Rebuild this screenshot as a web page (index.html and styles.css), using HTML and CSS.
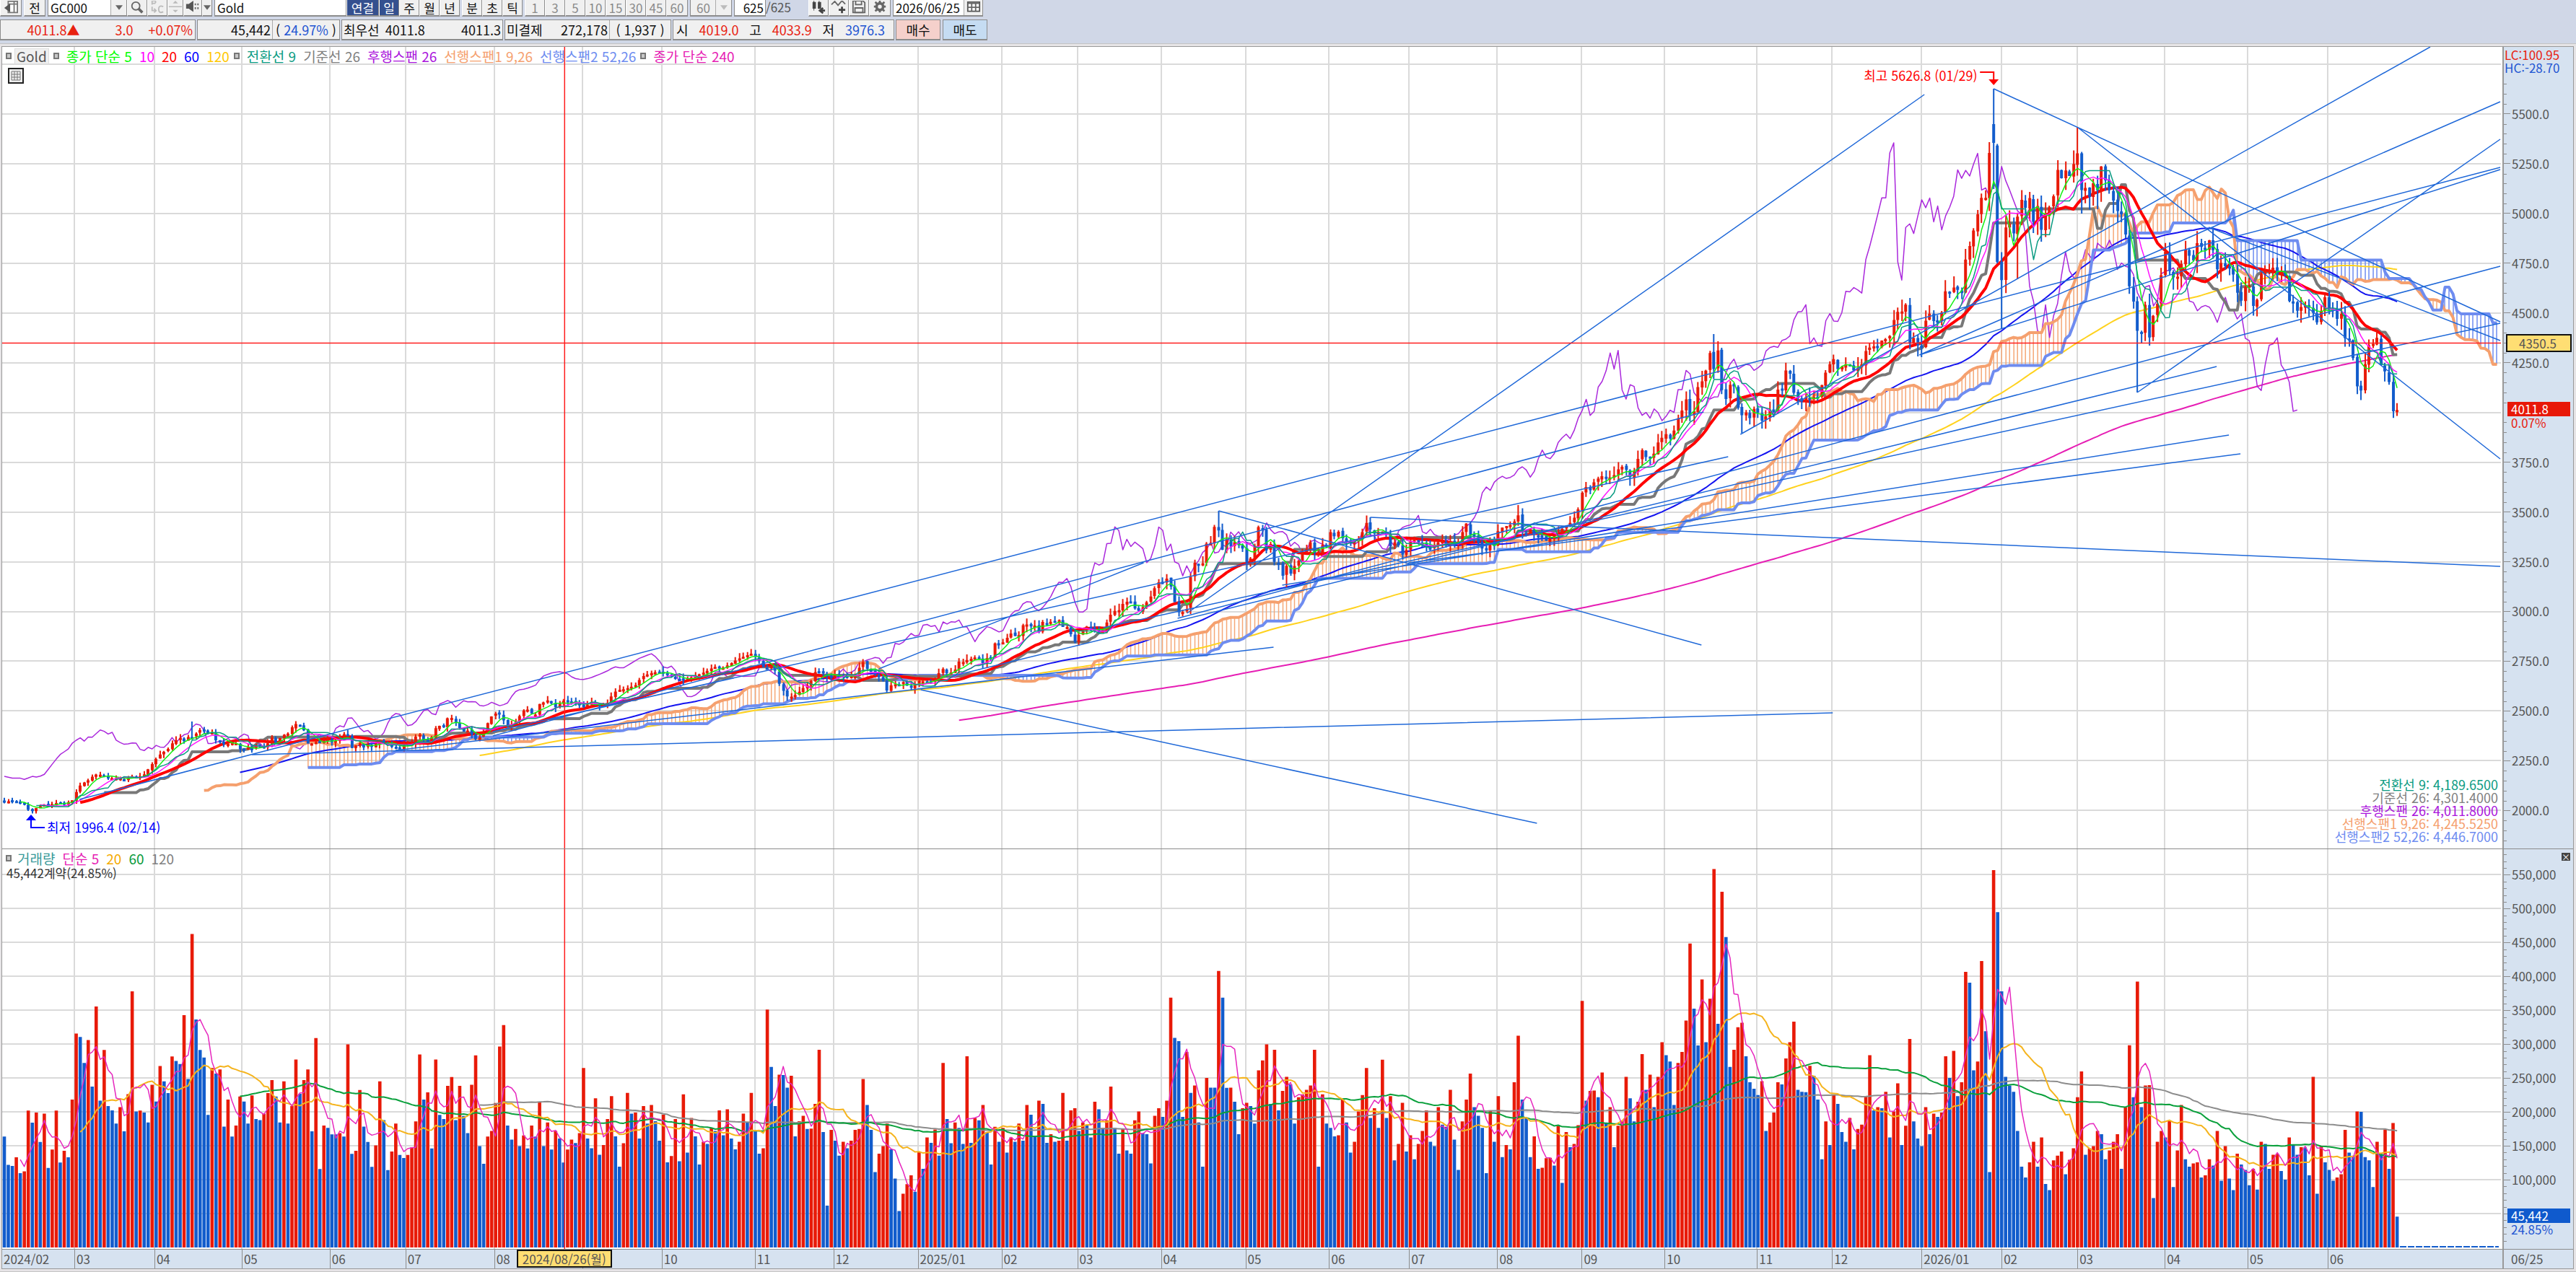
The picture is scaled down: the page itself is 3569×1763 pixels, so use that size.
FILE: index.html
```html
<!DOCTYPE html>
<html lang="ko">
<head>
<meta charset="utf-8">
<title>Gold 차트</title>
<link rel="stylesheet" href="styles.css">
</head>
<body>
<header class="toolbar">
  <button class="tool w30" aria-label="이전"><svg class="ico" viewBox="0 0 24 22"><path d="M8 1h14v17H8z" fill="#fff" stroke="#777" stroke-width="2"/><path d="M17 1v17M8 5h14" stroke="#777" stroke-width="2"/><path d="M11 4v14L2 11z" fill="#555"/></svg></button>
  <button class="tool w30 gap">전</button>
  <div class="field gap code"><input aria-label="종목코드" value="GC000"><button class="drop" aria-label="종목 목록"><svg class="tri" viewBox="0 0 12 8"><path d="M0 0h12L6 8z"/></svg></button></div>
  <button class="tool w28" aria-label="검색"><svg class="ico" viewBox="0 0 24 22"><circle cx="10" cy="8" r="6" fill="none" stroke="#666" stroke-width="2"/><path d="M14 12l6 6" stroke="#666" stroke-width="4"/></svg></button>
  <button class="tool w28 off" aria-label="풋콜"><svg class="ico" viewBox="0 0 24 22"><path d="M4 6V0h4q3 2 0 4H4M4 9v6h5M7 12l3 3-3 3" fill="none" stroke="#bbb" stroke-width="2"/><path d="M21 9q-7-3-7 4t7 4" fill="none" stroke="#bbb" stroke-width="2"/></svg></button>
  <button class="tool w22 off" aria-label="증감"><svg class="ico" viewBox="0 0 20 22"><path d="M6 4h8l-4-4zM6 14h8l-4 4z" fill="#bbb"/><path d="M0 9h20" stroke="#999"/></svg></button>
  <button class="tool w26" aria-label="소리"><svg class="ico" viewBox="0 0 24 22"><path d="M2 5h4l7-5v17l-7-5H2z" fill="#555"/><path d="M16 4v3M20 4v3M16 10v3M20 10v3" stroke="#666" stroke-width="2"/></svg></button>
  <button class="tool w14" aria-label="소리 목록"><svg class="tri" viewBox="0 0 12 8"><path d="M0 0h12L6 8z"/></svg></button>
  <div class="field gap name"><input aria-label="종목명" value="Gold"></div>
  <button class="tool w45 on">연결</button><button class="tool w28 on">일</button><button class="tool w28">주</button><button class="tool w28">월</button><button class="tool w28">년</button>
  <button class="tool w28 gap">분</button><button class="tool w28">초</button><button class="tool w28">틱</button>
  <button class="tool w28 gap off">1</button><button class="tool w28 off">3</button><button class="tool w28 off">5</button><button class="tool w28 off">10</button><button class="tool w28 off">15</button><button class="tool w28 off">30</button><button class="tool w28 off">45</button><button class="tool w30 off">60</button>
  <div class="field gap minute"><input aria-label="분 단위" value="60"><button class="drop" aria-label="분 목록"><svg class="tri pale" viewBox="0 0 12 8"><path d="M0 0h12L6 8z"/></svg></button></div>
  <div class="field gap count"><input aria-label="표시 봉수" value="625"></div><span class="total">/625</span>
  <button class="tool w28" aria-label="봉 유형"><svg class="ico" viewBox="0 0 24 22"><path d="M3 2h5v10H3zM11 2h5v10h-5z" fill="#444"/><path d="M5 0v15M13 0v13" stroke="#444"/><path d="M22 15h-6M19 11l-5 4 5 4" stroke="#444" stroke-width="3" fill="none"/></svg></button>
  <button class="tool w28" aria-label="지표 추가"><svg class="ico" viewBox="0 0 24 22"><path d="M1 6l5-5 5 6 6-7 5 5" fill="none" stroke="#666" stroke-width="2"/><path d="M17 9v10M12 14h10" stroke="#444" stroke-width="3"/></svg></button>
  <button class="tool w28" aria-label="저장"><svg class="ico" viewBox="0 0 24 22"><path d="M3 0h15l3 3v15H3z" fill="none" stroke="#666" stroke-width="2"/><path d="M7 0h9v6H7zM6 11h12v7H6z" fill="none" stroke="#666" stroke-width="2"/></svg></button>
  <button class="tool w30" aria-label="설정"><svg class="ico" viewBox="0 0 24 22"><circle cx="12" cy="9" r="5" fill="none" stroke="#666" stroke-width="4"/><path d="M12 0v3M12 15v3M3 9h3M18 9h3M5 2l3 3M16 13l3 3M19 2l-3 3M8 13l-3 3" stroke="#666" stroke-width="3"/></svg></button>
  <div class="field gap date"><input aria-label="날짜" value="2026/06/25"><button class="drop" aria-label="달력"><svg class="ico" viewBox="0 0 24 22"><path d="M3 2h18v14H3z" fill="#fff" stroke="#555" stroke-width="2"/><path d="M3 4h18M9 4v12M15 4v12M3 10h18" stroke="#666" stroke-width="2"/></svg></button></div>
</header>

<section class="quote">
  <div class="cell c1 up"><span class="q1">4011.8▲</span><span class="q2">3.0</span><span class="q3">+0.07%</span></div>
  <div class="cell c2"><span class="q4">45,442</span><span class="rate">( <b class="down">24.97%</b> )</span></div>
  <div class="cell c3"><span>최우선</span><span>4011.8</span><span class="end">4011.3</span></div>
  <div class="cell c4"><span class="oi">미결제</span><span class="q5">272,178</span><span class="rate">( 1,937 )</span></div>
  <div class="cell c5"><span>시</span><span class="up">4019.0</span><span>고</span><span class="up">4033.9</span><span>저</span><span class="down">3976.3</span></div>
  <button class="trade buy">매수</button>
  <button class="trade sell">매도</button>
</section>

<main class="chart">
  <section class="pane price">
    <svg id="price" class="plot" viewBox="3 65 3465 1111" preserveAspectRatio="none"></svg>
    <div class="legend">
      <i class="dot"></i><span class="chip">Gold</span><i class="dot"></i>
      <span class="m5">종가 단순 5</span><span class="m10">10</span><span class="m20">20</span><span class="m60">60</span><span class="m120">120</span>
      <i class="dot"></i><span class="tenkan">전환선 9</span><span class="kijun">기준선 26</span><span class="chikou">후행스팬 26</span><span class="spana">선행스팬1 9,26</span><span class="spanb">선행스팬2 52,26</span>
      <i class="dot"></i><span class="m240">종가 단순 240</span>
    </div>
    <button class="grid-btn" aria-label="표 보기"><svg viewBox="0 0 22 22"><path d="M1 1h20v20H1z" fill="#eee" stroke="#222" stroke-width="2"/><path d="M5 5h12v12H5zM9 5v12M13 5v12M5 9h12M5 13h12" fill="none" stroke="#777"/></svg></button>
    <ul class="readout">
      <li class="tenkan">전환선 9: 4,189.6500</li><li class="kijun">기준선 26: 4,301.4000</li><li class="chikou">후행스팬 26: 4,011.8000</li><li class="spana">선행스팬1 9,26: 4,245.5250</li><li class="spanb">선행스팬2 52,26: 4,446.7000</li>
    </ul>
    <span class="note high">최고 5626.8 (01/29)</span>
    <span class="note low">최저 1996.4 (02/14)</span>
  </section>
  <aside class="axis" id="price-axis">
    <div class="ratio"><span class="up">LC:100.95</span><span class="down">HC:-28.70</span></div>
  </aside>
  <section class="pane volume">
    <svg id="volume" class="plot" viewBox="3 1177 3465 554" preserveAspectRatio="none"></svg>
    <div class="legend">
      <i class="dot"></i><span class="vol">거래량</span><span class="m240">단순 5</span><span class="v20">20</span><span class="v60">60</span><span class="v120">120</span>
    </div>
    <span class="contracts">45,442계약(24.85%)</span>
  </section>
  <aside class="axis" id="volume-axis"><button class="close" aria-label="닫기">×</button></aside>
  <div class="months" id="months"></div>
  <div class="corner">06/25</div>
</main>
<footer class="strip"></footer>
<script src="chart.js"></script>
</body>
</html>
```
FILE: styles.css
```css
* { box-sizing: border-box; }
html, body { margin: 0; height: 100%; }
body {
  display: flex; flex-direction: column; overflow: hidden;
  background: #e6e4e6; color: #111;
  font: 17px/20px "Noto Sans CJK KR", sans-serif;
}
button, input { font: inherit; color: inherit; margin: 0; padding: 0; border: 0; border-radius: 0; background: none; }
.up { color: #e8210f; }
.down { color: #1e55d2; }

.toolbar { display: flex; height: 27px; padding-bottom: 4px; background: #d0d7e7; }
.tool { background: #f0f0f0; border-right: 1px solid #8c8c8c; border-bottom: 2px solid #8c8c8c; border-left: 1px solid #fff; display: flex; align-items: center; justify-content: center; }
.gap { margin-left: 3px; }
.w14 { width: 14px; } .w22 { width: 22px; } .w26 { width: 26px; } .w28 { width: 28px; } .w30 { width: 30px; } .w45 { width: 45px; }
.on { background: #34508f; color: #fff; }
.off { color: #8a8a8a; }
.ico { width: 22px; height: 20px; }
.tri { width: 10px; height: 7px; fill: #666; }
.pale { fill: #bbb; }
.field { display: flex; background: #fff; border: solid #8c8c8c; border-width: 0 1px 2px; }
.field input { flex: 1; min-width: 0; padding-left: 3px; }
.drop { width: 22px; background: #f0f0f0; border-left: 1px solid #aaa; display: flex; align-items: center; justify-content: center; }
.code { width: 110px; } .name { width: 183px; } .minute { width: 58px; color: #8a8a8a; } .minute input { background: #f0f0f0; padding-left: 8px; }
.count { width: 44px; } .count input { text-align: right; padding: 0 2px; }
.total { width: 59px; color: #555; }
.date { width: 125px; } .date .drop { width: 26px; }

.quote { display: flex; gap: 2px; height: 33px; padding-bottom: 4px; background: #d0d7e7; font-size: 18px; }
.cell { display: flex; align-items: center; background: #f0f0f0; border: solid #8c8c8c; border-width: 1px 1px 2px; white-space: pre; }
.c1 { width: 271px; justify-content: flex-end; padding-right: 3px; gap: 21px; }
.q1 { margin-right: 28px; }
.c2 { width: 198px; }
.c3 { width: 224px; padding: 0 2px; gap: 8px; } .end { margin-left: auto; }
.c4 { width: 231px; } .oi { padding-left: 2px; }
.q4 { width: 104px; text-align: right; }
.q5 { flex: 1; text-align: right; }
.q4, .q5 { line-height: 26px; border-right: 1px solid #aaa; padding-right: 2px; }
.rate { flex: 1; text-align: center; } .c4 .rate { flex: 0 0 84px; }
.rate b { font-weight: 400; }
.c5 { width: 307px; padding: 0 12px 0 4px; justify-content: space-between; }
.trade { width: 62px; border: solid #8c8c8c; border-width: 1px 1px 2px; }
.buy { background: #f5d0cb; } .sell { background: #c5dcf2; margin-left: 1px; }

.chart {
  flex: 1; min-height: 0; display: grid; margin: 4px 3px 0 2px;
  grid-template: minmax(0, 1112fr) minmax(0, 554fr) 27px / minmax(0, 1fr) 98px;
  border: 1px solid #999; background: #fff;
  outline: 1px solid #c4c4c4; outline-offset: 3px;
}
.pane { position: relative; min-width: 0; overflow: hidden; }
.price, #price-axis { border-bottom: 1px solid #8c8c8c; }
.plot { position: absolute; inset: 0; width: 100%; height: 100%; }
.plot * { vector-effect: non-scaling-stroke; }
.legend { position: relative; display: flex; align-items: center; height: 25px; padding-left: 5px; gap: 10px; white-space: pre; font-size: 19px; }
.dot { width: 8px; height: 9px; background: #c8c8c8; border: 2px solid #777; }
.legend .dot:not(:first-child) { margin-left: -4px; }
.legend .dot:first-child { margin-right: -6px; }
.chip { background: #f0f0f0; border: 1px solid #ddd; padding: 0 2px; color: #555; }
.m5 { color: #00ff00; } .m10 { color: #ff00ff; } .m20 { color: #ff0000; } .m60 { color: #0000ff; } .m120 { color: #ffc800; } .m240 { color: #e61eb4; }
.tenkan { color: #0a9b82; } .kijun { color: #808080; } .chikou { color: #aa14dc; } .spana { color: #f5a06e; } .spanb { color: #6e8cf0; }
.vol { color: #3a9a9a; margin-left: 4px; } .v20 { color: #f5aa00; } .v60 { color: #0a9b3c; } .v120 { color: #808080; }
.grid-btn { position: relative; display: block; width: 22px; height: 22px; margin: 4px 0 0 8px; }
.grid-btn svg { display: block; }
.readout { position: absolute; right: 6px; bottom: 8px; margin: 0; padding: 0; list-style: none; text-align: right; font-size: 18px; line-height: 18px; white-space: nowrap; }
.note { position: absolute; white-space: pre; font-size: 18px; }
.high { color: #f00; right: 21%; top: 29px; }
.low { color: #00f; left: 62px; bottom: 20px; }
.contracts { position: relative; display: block; padding-left: 6px; margin-top: -2px; color: #333; }

.axis { position: relative; background: #d6e2f0; border-left: 2px solid #999; color: #555; overflow: hidden; }
.ratio { display: flex; flex-direction: column; padding: 2px 0 0 1px; line-height: 18px; }
.tick { position: absolute; left: 0; display: flex; align-items: center; height: 20px; margin-top: -10px; }
.tick::before { content: ""; width: 9px; height: 1px; margin-right: 2px; background: #8c8c8c; }
.minor { position: absolute; left: 0; width: 4px; height: 1px; background: #8c8c8c; }
.tag { position: absolute; left: 5px; right: 4px; height: 20px; margin-top: -10px; padding-left: 5px; color: #fff; }
.tag.last { background: #e81808; } .tag.qty { background: #0f5acd; }
.tag.cross { left: 3px; right: 2px; height: 25px; margin-top: -12px; padding: 1px 0 0 16px; background: #ffde73; border: 2px solid #111; color: #555; }
.sub { position: absolute; left: 10px; line-height: 18px; }
.close { position: absolute; right: 4px; top: 5px; width: 12px; height: 11px; background: #444; color: #fff; font-size: 12px; line-height: 10px; }
.months, .corner { position: relative; background: #d6e2f0; border-top: 1px solid #8c8c8c; color: #555; line-height: 25px; }
.corner { border-left: 2px solid #999; padding-left: 10px; }
.month { position: absolute; top: 0; height: 100%; padding-left: 2px; border-left: 1px solid #8c8c8c; }
.month:first-child { border: 0; }
.day { position: absolute; top: 0; height: 25px; width: 132px; margin-left: -67px; line-height: 22px; text-align: center; background: #ffde73; border: 2px solid #111; }
.strip { height: 4px; }
```
FILE: chart.js
```js
const NS = "http://www.w3.org/2000/svg";
const X0 = 6, STEP = 5.536, N = 600;
const xOf = i => X0 + STEP * i;
const priceY = p => 1123.4 - (p - 2000) * 0.2759;
const volY = v => 1729 - v * 0.9394;

function add(svg, tag, attrs) {
  const el = document.createElementNS(NS, tag);
  for (const k in attrs) el.setAttribute(k, attrs[k]);
  svg.appendChild(el);
}
function path(svg, d, color, width, extra) {
  add(svg, "path", Object.assign({ d, fill: "none", stroke: color, "stroke-width": width }, extra));
}
function line(svg, ys, color, width, shift = 0) {
  let d = "";
  ys.forEach((y, i) => { if (y != null && i + shift >= 0) d += (d ? "L" : "M") + xOf(i + shift).toFixed(1) + " " + y.toFixed(1); });
  path(svg, d, color, width, { "stroke-linejoin": "round" });
}
const average = (a, n) => a.map((_, i) => i < n - 1 ? null : a.slice(i - n + 1, i + 1).reduce((s, v) => s + v, 0) / n);

/* Daily volume; each block has its own unit, in thousands of contracts */
const VOLUME = [[0.4163, "393 293 289 320 263 270 485 442 478 374 474 282 347 485 301 343 320 524 758 746 654 735 570 854 520 700 501 486 439 497 412 543 908 482 485 478 443 577 517 643 589 547 677 661 650 823 597 1111 808 700 673 470 636 616 631 428 524 393 432 535 517 439 539 455 451 474 547 593 535 443 589 439 501 666 545 593 631 412 742 278 432 424 401 401 405 393 720 332 343 558 428 374 286 362 589 451 274 340 439 328 317 328 355 447 684 524 550 351 666 470 455 573 604 451 573 466 405 577 681 359 297 393 413 512 712 788 432 382 420 359 397 351 432 393 514 359 443 347 413 386 301 347 382 370"],
[0.3958, "426 669 406 370 556 346 382 479 564 414 301 389 576 499 503 406 527 462 531 471 398 495 317 341 479 321 571 354 483 414 309 394 386 446 434 511 418 515 406 366 394 499 466 576 434 350 370 887 673 527 644 643 596 640 414 471 491 442 443 535 737 430 156 438 398 342 394 370 398 438 442 628 531 438 281 350 378 462 366 257 136 200 236 269 208 358 293 410 390 440 342 688 479 389 466 446 386 713 390 483 474 531 430 309 450 394 446 354 410 394 462 398 531 495 414 547 535 390 422 394 398 576 398 511 519 434 466 458 410 543 515 446 474 600 446 350 442 362 350 474 507 426 422 313 491 519 487 547 931 781 769 487 729 576 604 466 301 632 596 596 1031 931 595 596 543 422 519 539 527 462 660 697 757 535 737 511 584 636 608 462 560 571 588 604 737 301 571 462 446 414 418 551 466 354 394 507 568 669 483 519 446 700 483 564 325 386 539 358 418 329 386 434 511 394 378 523 458 450 588 402 289 470 551 648 523 491 446 277 511 394 564 337 382 366 616 789 551 483 337 414 293 297 333 334 305 454 241 430 374 386 456 919 547 584 585 560 652 466 523 374 454 470 636 556 470 543 721 588 644 523 636 765 717 693 531 688 729 846 1133 890 753 999 765 927 1411 834 1326 1157 673 737 821 838 713 616 592 568 620 434 466 503 616 608 705 765 842 588 580 579 677 640 551 329 470 382 568 535 430 394 483 366 442 458 564 717 511 523 519 580 410 507 612 382 454 777 470 406 378 523 422 499 487 503 713 632 733 564 616 1027 987 660 693 1068 806 281 1407 1250 955 636 604 580 434 301 261 317 394 301 410 237 214 325 342 358 273 327 370 560 656 346 370 378 434 422 329 362 394 422 293 523 754 560 991 523 604 605 184 394 434 410 471 225 362 531 329 301 313 317 261 269 329 305 434 249 378 257 214 350 309 289 232 293 216 394 386 293 346 350 285 253 410 382 346 374 373 269 636 200 378 317 289 249 261 273 438 354 342 507 506 337 325 225 394 350 440 293 464 115"]];
const volume = VOLUME.flatMap(([unit, s]) => s.split(" ").map(v => v * unit));

/* Closing prices: [origin x, origin y, x scale, y scale, points] per stretch of the chart */
const CLOSES = [
[0, 950, 1.3176, 1.9287, "7,312 20,308 43,316 51,332 58,336 66,328 80,318 88,320 103,314 118,314 131,310 138,288 146,268 153,260 160,255 173,238 182,238 190,243 205,248 220,248 228,252 240,243 250,245 262,240 270,225 278,210 285,197 292,185 299,178 306,172 314,155 321,147 329,140 337,150 345,135 349,140 356,133 363,118 372,122 380,130 385,118 393,145 401,152 410,158 420,155 430,152 437,170 445,175 452,165 460,170 467,160 480,168 488,158 496,138 503,155 510,142 520,130 528,128 533,112 540,103 548,106 555,120 562,155 570,155 580,150 590,150 598,140 606,152 615,145 622,135 634,125 640,170 648,162 656,153 664,166 672,158 680,165 693,145 700,150 710,158 722,165 730,170 740,155 752,155 760,135 766,130 773,145 782,150 788,140 795,115 803,108 810,112 817,88 824,85 831,98 840,115 848,125 857,118 866,145 875,140 884,125 892,95 900,78 910,72 918,90 926,108 935,105 943,95 955,68 962,62 970,75 978,78 985,50 993,45 1000,40 1010,48 1016,62 1025,42 1033,40 1040,48 1048,38 1055,52 1063,56 1072,52 1080,45 1088,50 1096,55 1104,50 1112,45 1118,25 1127,12 1140,10 1150,5 1160,0"],
[0, 0, 0.4394, 0.4394, "391,412 396,410 401,409 406,410 410,413 415,414 420,413 425,411 430,409 435,406 440,407 445,404 450,401 455,399 458,398 462,402 466,408 469,405 472,408 475,418 480,425 485,423 489,419 493,417 497,408 501,410 505,413 509,411 513,412"],
[1180, 600, 1.568, 3, "10,1010 20,960 28,950 35,985 45,995 55,1010 68,1025 76,1075 85,1050 95,1045 105,1045 113,1035 120,1050 130,1060 145,1030 160,1035 170,1035 180,1030 190,1000 200,980 210,1005 225,985 232,950 240,955 250,945 262,938 275,930 285,960 295,935 303,935 311,875 320,880 330,870 337,855 345,832 355,845 365,840 372,800 380,795 390,805 400,800 408,830 415,785 425,795 433,785 440,790 450,775 458,808 466,800 475,830 485,870 494,840 502,825 512,805 520,810 530,820 540,830 548,820 560,765 570,740 580,740 590,710 600,700 610,705 617,735 625,740 633,725 648,690 658,650 666,620 675,625 685,605 694,640 702,700 710,745 720,745 730,730 737,600 746,540 755,550 763,545 772,460 780,465 788,390 797,395 806,490 815,440 822,480 830,450 840,465 850,480 858,540 866,530 875,480 885,390 893,400 902,490 910,455 920,540 930,545 937,595 945,550 953,590 962,555 970,540 978,495 985,500 997,450 1005,500 1015,495 1023,465 1033,475 1040,410 1050,430 1058,410 1066,435 1075,455 1085,460 1095,450 1103,440 1110,415 1118,370 1127,400 1135,420 1145,412 1155,410 1163,425 1172,475 1180,455 1190,470 1198,510 1207,485 1215,450 1225,445 1235,460 1245,465 1255,485 1263,475 1275,455 1285,450 1292,465 1300,450 1310,465 1318,455 1328,410 1338,370 1345,425 1355,430 1363,460 1370,480 1380,485 1388,450 1397,470 1405,410 1413,395 1425,385 1438,380 1440,370"],
[2100, 350, 2.24, 3, "8,1085 20,1160 33,1170 47,1150 60,1175 72,1180 85,1180 97,1200 108,1190 120,1175 133,1170 145,1150 157,1140 170,1125 182,1105 195,1070 207,1000 220,975 232,990 245,955 257,940 270,930 283,940 295,935 307,925 320,900 333,890 345,905 357,935 369,910 382,855 393,820 405,850 418,858 430,840 443,790 456,770 468,755 480,775 493,740 505,690 517,660 530,610 543,680 555,660 567,560 580,535 590,505 604,415 617,485 627,375 641,570 654,610 665,550 678,550 691,645 705,680 716,665 728,690 741,650 753,665 766,700 779,680 790,655 803,665 816,565 828,570 840,490 853,505 866,590 878,605 890,620 903,600 916,610 928,600 940,600 952,550 964,500 978,460 988,440 1001,485 1013,475 1025,465 1037,465 1051,490 1063,480 1076,465 1088,410 1101,395 1113,390 1125,395 1138,365 1150,360 1162,350 1175,280 1188,245 1200,245 1212,215 1225,385 1235,350 1248,385 1262,390 1272,290 1285,250 1298,285 1310,290 1323,255 1337,155 1350,165 1360,145 1373,155 1387,170"],
[2550, 60, 2.529, 2.8, "439,845 455,785 470,720 480,675 496,600 511,600 523,430 538,385 553,865 568,925 580,715 595,700 611,745 622,675 637,605 650,640 663,590 678,695 694,625 705,730 720,670 733,640 747,605 762,490 777,525 792,490 803,520 818,470 835,420 846,570 860,560 876,600 887,540 902,575 917,475 928,525 943,565 960,615 974,655 985,655 1001,745 1016,965 1027,990 1043,1120 1058,1125 1070,1010 1084,1145 1099,1055 1112,1015 1125,910 1142,800 1157,900 1170,910 1185,905 1198,850 1210,800 1225,825 1240,845 1252,775 1267,790 1280,800 1293,760 1308,800 1323,880 1338,850 1350,865 1365,870 1380,900 1391,965 1407,1000 1422,940 1435,940 1448,1020 1463,995 1475,895 1490,885 1505,880 1520,870 1532,900 1548,885"],
[3050, 60, 3, 2.45, "352,790 367,875 385,880 402,910 418,895 433,890 450,895 467,915 483,950 502,905 520,855 533,905 551,905 569,940 583,915 601,1005 618,1010 632,1060 650,1165 668,1180 682,1095 700,1025 718,1020 737,995 748,1090 767,1115 785,1155 799,1250 817,1245"]];
const knots = CLOSES.flatMap(([ox, oy, sx, sy, s]) => s.split(" ").map(p => { const [a, b] = p.split(",").map(Number); return [ox + a / sx, oy + b / sy]; }));
const close = [];
for (let i = 0, k = 0; i < N; i++) {
  const x = xOf(i);
  while (k < knots.length - 2 && knots[k + 1][0] < x) k++;
  const [ax, ay] = knots[k], [bx, by] = knots[k + 1];
  const t = Math.min(1, Math.max(0, (x - ax) / (bx - ax)));
  close.push(ay + (by - ay) * t);
}
const wobble = i => Math.abs(Math.sin(i * 12.9898) * 43758.5453) % 1;
const open = close.map((c, i) => i ? close[i - 1] + (wobble(i) - 0.5) * 3 : c - 2);
const spread = close.map(c => 2 + (1130 - c) * 0.009);
const top_ = close.map((c, i) => Math.min(c, open[i]) - wobble(i + 700) * spread[i] * 2);
const low_ = close.map((c, i) => Math.max(c, open[i]) + wobble(i + 1400) * spread[i] * 2);
/* Sessions with long shadows: [x, high, low] */
[[265, 1000, null], [1689, 708, null], [1783, null, 815], [1899, 717, null], [2104, 700, null], [2376, 463, null], [2763, 123, 262], [2774, null, 456], [2796, null, 387], [2829, null, 335], [2880, 177, null], [2885, null, 296], [2907, null, 290], [2962, null, 544], [1228, null, 960], [2412, null, 600], [2658, null, 494]].forEach(([x, h, l]) => {
  const i = Math.round((x - X0) / STEP);
  if (h) top_[i] = h;
  if (l) low_[i] = l;
});
/* The record session closed below its open */
const peak = Math.round((2763 - X0) / STEP);
open[peak] = 172;
close[peak] = 198;
const middle = n => close.map((_, i) => i < n - 1 ? null : (Math.min(...top_.slice(i - n + 1, i + 1)) + Math.max(...low_.slice(i - n + 1, i + 1))) / 2);

const MONTHS = [[103, "03"], [214, "04"], [335, "05"], [457, "06"], [562, "07"], [685, "08"], [807, ""], [917, "10"], [1046, "11"], [1155, "12"], [1272, "2025/01"], [1388, "02"], [1493, "03"], [1609, "04"], [1726, "05"], [1842, "06"], [1953, "07"], [2075, "08"], [2192, "09"], [2307, "10"], [2435, "11"], [2539, "12"], [2663, "2026/01"], [2774, "02"], [2879, "03"], [3000, "04"], [3115, "05"], [3226, "06"]];
const GRID = "#dadada", RED = "#e81a08", BLUE = "#125ccc";

/* Price pane */
const ps = document.getElementById("price");
let g = MONTHS.map(([x]) => `M${x} 65V1176`).join("");
for (let p = 2000; p <= 5750; p += 250) g += `M3 ${Math.round(priceY(p))}H3466`;
path(ps, g, GRID, 2, { "shape-rendering": "crispEdges" });

const tenkan = middle(9), kijun = middle(26), wide = middle(52);
const spanA = tenkan.map((t, i) => kijun[i] == null ? null : (t + kijun[i]) / 2);
let warm = "", cool = "";
for (let i = 51; i < N; i++) {
  const s = `M${Math.round(xOf(i + 25))} ${spanA[i].toFixed(1)}V${wide[i].toFixed(1)}`;
  if (spanA[i] < wide[i]) warm += s; else cool += s;
}
path(ps, warm, "#f5a878", 1.5);
path(ps, cool, "#6e8cf0", 1.5);

let wicks = ["", ""], bodies = ["", ""];
for (let i = 0; i < N; i++) {
  const c = close[i] <= open[i] ? 0 : 1, x = Math.round(xOf(i));
  const a = Math.min(close[i], open[i]), h = Math.max(3, Math.abs(close[i] - open[i]));
  wicks[c] += `M${x} ${top_[i].toFixed(1)}V${low_[i].toFixed(1)}`;
  bodies[c] += `M${x - 2} ${a.toFixed(1)}h4v${h.toFixed(1)}h-4z`;
}
line(ps, average(close, 120), "#ffd21e", 2);
line(ps, average(close, 240), "#e61eb4", 2);
line(ps, average(close, 60), "#1414f0", 2);
line(ps, close, "#aa28dc", 1.5, -25);
line(ps, spanA, "#f5a06e", 4, 25);
line(ps, wide, "#6e8cf0", 4, 25);
line(ps, kijun, "#787878", 4);
line(ps, average(close, 20), "#ff0000", 4);
[RED, BLUE].forEach((c, k) => {
  path(ps, wicks[k], c, 2);
  add(ps, "path", { d: bodies[k], fill: c });
});
line(ps, average(close, 5), "#14f014", 1.5);
line(ps, average(close, 10), "#ff14ff", 1.5);
line(ps, tenkan, "#0a9b82", 1.5);

const TRENDS = [[110,1108,3465,232],[349,1046,2540,988],[683,1020,2361,571],[683,1014,2395,633],[548,1040,1765,897],[1218,927,1585,780],[1645,850,2667,131],[1689,708,2358,894],[1276,956,2130,1141],[1899,717,2323,736],[2323,736,3465,785],[2412,602,3368,65],[2660,492,3465,141],[2962,544,3465,193],[2660,492,3465,235],[1632,857,3465,369],[1529,870,3465,448],[1320,937,3072,508],[1777,811,3089,603],[1952,780,3105,629],[2763,123,3465,446],[2880,177,3465,636],[3061,315,3465,472]];
path(ps, TRENDS.map(([a, b, c, d]) => `M${a} ${b}L${c} ${d}`).join(""), "#1f68d8", 1.5);
path(ps, "M2744 100H2763V112", "#f00", 2);
add(ps, "path", { d: "M2756 110h14l-7 8z", fill: "#f00" });
path(ps, "M62 1147H43V1136", "#00f", 2);
add(ps, "path", { d: "M36 1137h14l-7-8z", fill: "#00f" });
path(ps, "M782.5 65V1176M3 475.5H3466", "#ff1e1e", 1.5);

/* Volume pane */
const vs = document.getElementById("volume");
g = MONTHS.map(([x]) => `M${x} 1177V1731`).join("");
for (let v = 50; v <= 550; v += 50) g += `M3 ${Math.round(volY(v))}H3466`;
path(vs, g, GRID, 2, { "shape-rendering": "crispEdges" });
const bars = ["", ""];
volume.forEach((v, i) => {
  bars[i && v > volume[i - 1] ? 0 : 1] += `M${(xOf(i) - 2.3).toFixed(1)} 1729V${volY(v).toFixed(1)}h4.6V1729z`;
});
add(vs, "path", { d: bars[0], fill: RED });
add(vs, "path", { d: bars[1], fill: BLUE });
[[120, "#8c8c8c", 2], [60, "#0aa03c", 2], [20, "#f5b41e", 2], [5, "#e628be", 1.5]].forEach(([n, c, w]) =>
  line(vs, average(volume, n).map(v => v == null ? null : volY(v)), c, w));
path(vs, "M3326 1728H3463", BLUE, 2, { "stroke-dasharray": "9 2" });
path(vs, "M782.5 1177V1731", "#ff1e1e", 1.5);

/* Scales */
function mark(host, cls, text, pos, side = "top") {
  const el = document.createElement("span");
  el.className = cls;
  el.textContent = text;
  el.style[side] = pos.toFixed(3) + "%";
  host.appendChild(el);
}
const pAxis = document.getElementById("price-axis"), vAxis = document.getElementById("volume-axis");
const pPct = y => (y - 65) / 11.11, vPct = y => (y - 1177) / 5.54;
for (let p = 1850; p <= 5650; p += 50) if (p % 250) mark(pAxis, "minor", "", pPct(priceY(p)));
for (let p = 2000; p <= 5500; p += 250) if (p !== 4000) mark(pAxis, "tick", p + ".0", pPct(priceY(p)));
mark(pAxis, "tag cross", "4350.5", pPct(475));
mark(pAxis, "tag last", "4011.8", pPct(567));
mark(pAxis, "sub up", "0.07%", pPct(577));
for (let v = 0; v <= 580; v += 10) if (v % 50) mark(vAxis, "minor", "", vPct(volY(v)));
for (let v = 50; v <= 550; v += 50) mark(vAxis, "tick", v + ",000", vPct(volY(v)));
mark(vAxis, "tag qty", "45,442", vPct(1685));
mark(vAxis, "sub down", "24.85%", vPct(1695));
const months = document.getElementById("months");
mark(months, "month", "2024/02", 0, "left");
MONTHS.forEach(([x, t]) => mark(months, "month", t, (x - 3) / 34.65, "left"));
mark(months, "day", "2024/08/26(월)", (783 - 3) / 34.65, "left");
```
